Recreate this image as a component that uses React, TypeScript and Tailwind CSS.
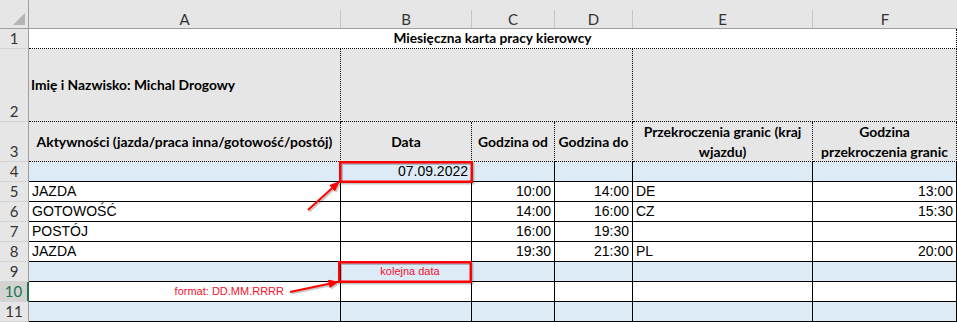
const COLS = ['A', 'B', 'C', 'D', 'E', 'F'];

type Row = {
  n: number;
  a?: string;
  b?: string;
  c?: string;
  d?: string;
  e?: string;
  f?: string;
  fill?: boolean;
};

const rows: Row[] = [
  { n: 4, b: '07.09.2022', fill: true },
  { n: 5, a: 'JAZDA', c: '10:00', d: '14:00', e: 'DE', f: '13:00' },
  { n: 6, a: 'GOTOWOŚĆ', c: '14:00', d: '16:00', e: 'CZ', f: '15:30' },
  { n: 7, a: 'POSTÓJ', c: '16:00', d: '19:30' },
  { n: 8, a: 'JAZDA', c: '19:30', d: '21:30', e: 'PL', f: '20:00' },
  { n: 9, fill: true },
  { n: 10 },
  { n: 11, fill: true },
];

function RowHead({ n, active = false }: { n: number; active?: boolean }) {
  return (
    <div
      className={
        active
          ? "flex items-end justify-center border-b border-b-[#d4d4d4] border-r-2 border-r-[#217346] bg-[#d2d2d2] font-['Lato',sans-serif] text-[15px] leading-[19px] text-[#217346]"
          : "flex items-end justify-center border-b border-b-[#d4d4d4] border-r border-r-[#9e9e9e] bg-[#e6e6e6] font-['Lato',sans-serif] text-[15px] leading-[19px] text-[#333]"
      }
    >
      {n}
    </div>
  );
}

// red annotation arrow: straight shaft + filled head
function Arrow({ x1, y1, x2, y2 }: { x1: number; y1: number; x2: number; y2: number }) {
  const len = Math.hypot(x2 - x1, y2 - y1);
  const ux = (x2 - x1) / len;
  const uy = (y2 - y1) / len;
  const bx = x2 - ux * 9;
  const by = y2 - uy * 9;
  const px = -uy * 3.6;
  const py = ux * 3.6;
  const head = `${x2},${y2} ${bx + px},${by + py} ${bx - px},${by - py}`;
  return (
    <g>
      <line x1={x1} y1={y1} x2={bx} y2={by} strokeWidth={2} />
      <polygon points={head} />
    </g>
  );
}

function Notes() {
  const shapes = (
    <>
      <rect x={340.25} y={162.25} width={131.5} height={19.5} fill="none" strokeWidth={2.5} />
      <rect x={339.25} y={262.25} width={131.5} height={19.5} fill="none" strokeWidth={2.5} />
      <Arrow x1={308} y1={210} x2={339} y2={182} />
      <Arrow x1={290} y1={292} x2={338} y2={282} />
    </>
  );
  return (
    <svg className="pointer-events-none absolute inset-0" width={957} height={322}>
      <g stroke="#000" fill="#000" opacity={0.22} transform="translate(1.5 1.5)">
        {shapes}
      </g>
      <g stroke="#ff0000" fill="#ff0000">
        {shapes}
      </g>
    </svg>
  );
}

export default function App() {
  const cell = "border-b border-r border-black px-[3px] font-['Liberation_Sans',Arial,sans-serif] text-[14px] leading-[19px] text-black flex items-center";
  const hdr = "flex items-center justify-center text-center border-b border-b-black border-r border-dotted border-r-black bg-[#e7e6e6] font-['Lato',sans-serif] font-bold text-[13.9px] leading-[20px] text-black";

  return (
    <div className="relative w-[957px] h-[322px] overflow-hidden bg-white">
      <div className="grid grid-cols-[29px_312px_131px_83px_78px_180px_144px] grid-rows-[29px_20px_73px_40px_repeat(8,20px)]">
        {/* column headers */}
        <div className="flex items-end justify-end border-b border-r border-[#9e9e9e] bg-[#e6e6e6] pb-[3px] pr-[3px]">
          <svg width="12" height="12" viewBox="0 0 12 12">
            <polygon points="12,0 12,12 0,12" fill="#b4b4b4" />
          </svg>
        </div>
        {COLS.map((c, i) => (
          <div key={c} className="flex border-b border-[#9e9e9e] bg-[#e6e6e6] pt-[10px]">
            <div
              className={
                i === COLS.length - 1
                  ? "flex flex-1 items-center justify-center font-['Lato',sans-serif] text-[15px] text-[#333]"
                  : "flex flex-1 items-center justify-center border-r border-[#c6c6c6] font-['Lato',sans-serif] text-[15px] text-[#333]"
              }
            >
              {c}
            </div>
          </div>
        ))}

        {/* row 1 */}
        <RowHead n={1} />
        <div className="col-span-6 flex items-center justify-center border-b border-r border-dotted border-black bg-white font-['Lato',sans-serif] font-bold text-[13.7px] text-black">
          Miesięczna karta pracy kierowcy
        </div>

        {/* row 2 */}
        <RowHead n={2} />
        <div className="flex items-center border-b border-r border-dotted border-black bg-[#e7e6e6] px-[2px] font-['Lato',sans-serif] font-bold text-[13.8px] text-black">
          Imię i Nazwisko: Michal Drogowy
        </div>
        <div className="col-span-3 border-b border-r border-dotted border-black bg-[#e7e6e6]" />
        <div className="col-span-2 border-b border-r border-dotted border-black bg-[#e7e6e6]" />

        {/* row 3 */}
        <RowHead n={3} />
        <div className={hdr}>Aktywności (jazda/praca inna/gotowość/postój)</div>
        <div className={hdr}>Data</div>
        <div className={hdr}>Godzina od</div>
        <div className={hdr}>Godzina do</div>
        <div className={hdr}>
          Przekroczenia granic (kraj
          <br />
          wjazdu)
        </div>
        <div className={hdr}>
          Godzina
          <br />
          przekroczenia granic
        </div>

        {/* rows 4-11 */}
        {rows.map((r) => {
          const bg = r.fill ? 'bg-[#ddebf7]' : 'bg-white';
          return [
            <RowHead key={`h${r.n}`} n={r.n} active={r.n === 10} />,
            <div key={`a${r.n}`} className={`${cell} ${bg} justify-start`}>
              {r.n === 10 ? (
                <span className="ml-auto mr-[53px] font-['Liberation_Sans',Arial,sans-serif] text-[11px] text-[#f2102c]">
                  format: DD.MM.RRRR
                </span>
              ) : (
                r.a
              )}
            </div>,
            <div key={`b${r.n}`} className={`${cell} ${bg} justify-end`}>
              {r.n === 9 ? (
                <span className="flex-1 pl-[8px] text-center font-['Liberation_Sans',Arial,sans-serif] text-[11px] text-[#f2102c]">
                  kolejna data
                </span>
              ) : (
                r.b
              )}
            </div>,
            <div key={`c${r.n}`} className={`${cell} ${bg} justify-end`}>{r.c}</div>,
            <div key={`d${r.n}`} className={`${cell} ${bg} justify-end`}>{r.d}</div>,
            <div key={`e${r.n}`} className={`${cell} ${bg} justify-start`}>{r.e}</div>,
            <div key={`f${r.n}`} className={`${cell} ${bg} justify-end`}>{r.f}</div>,
          ];
        })}
      </div>
      <Notes />
    </div>
  );
}
